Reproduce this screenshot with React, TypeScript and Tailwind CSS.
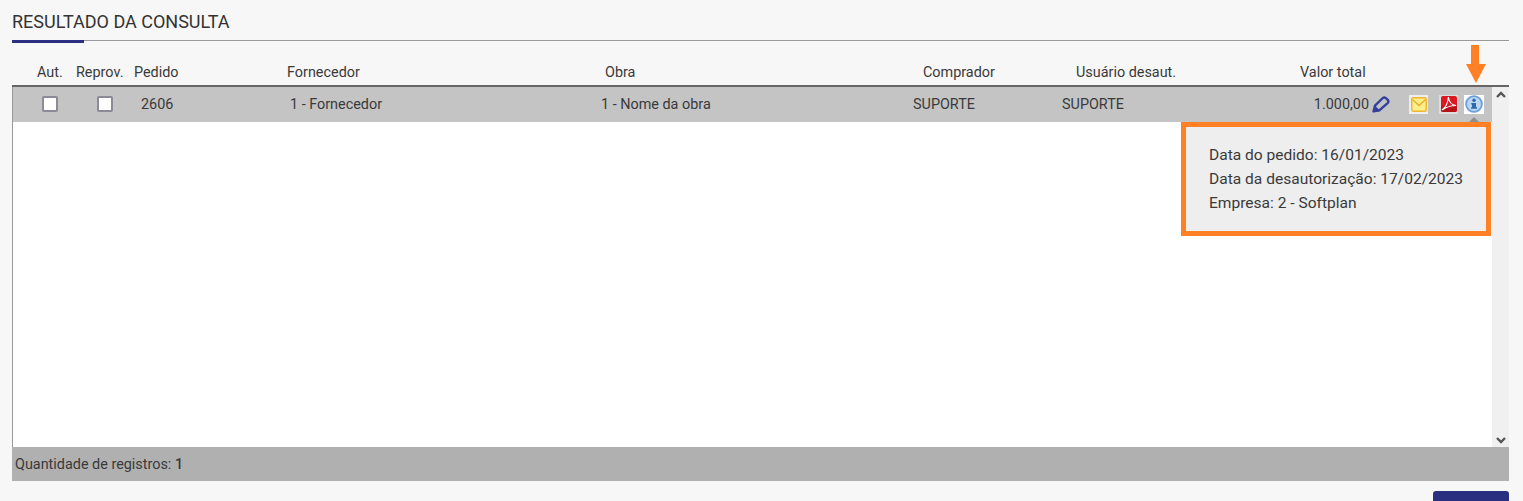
import React from 'react';

const headers = [
  { label: 'Aut.', cls: 'w-[64px] pl-[25px]' },
  { label: 'Reprov.', cls: 'w-[58px]' },
  { label: 'Pedido', cls: 'w-[153px]' },
  { label: 'Fornecedor', cls: 'w-[318px]' },
  { label: 'Obra', cls: 'w-[318px]' },
  { label: 'Comprador', cls: 'w-[153px]' },
  { label: 'Usuário desaut.', cls: 'w-[224px]' },
  { label: 'Valor total', cls: 'w-[66px]' },
];

const PencilIcon = () => (
  <svg width="18" height="17" viewBox="0 0 18 17" className="shrink-0">
    <path d="M1.6 15.4 L3 9.6 L10.8 2 Q12.2 0.9 13.6 1.9 L16 4.2 Q16.9 5.6 15.9 6.8 L7.6 14.2 Z" fill="none" stroke="#33409c" strokeWidth="2.4" strokeLinejoin="round" />
    <path d="M1.2 16 L3 9.6 L7.6 14.2 Z" fill="#33409c" />
  </svg>
);

const MailIcon = () => (
  <div className="w-[19px] h-[19px] bg-[#eeeeee] flex items-center justify-center">
    <svg width="16" height="15" viewBox="0 0 16 15">
      <rect x="0.75" y="0.75" width="14.5" height="13.5" rx="1.5" fill="#fdf08a" stroke="#f2b632" strokeWidth="1.5" />
      <path d="M1.5 2.5 L8 8.5 L14.5 2.5" fill="none" stroke="#eda92b" strokeWidth="1.3" />
    </svg>
  </div>
);

const PdfIcon = () => (
  <div className="w-[19px] h-[19px] bg-[#e0dcdc] flex items-center justify-center">
    <svg width="16" height="16" viewBox="0 0 16 16">
      <rect width="16" height="16" rx="2" fill="#dc1820" />
      <rect y="10" width="16" height="6" rx="2" fill="#b81016" />
      <path d="M1 14 C4.5 11.5 7 7 7.4 1 C8 6 10.5 9 15 9.5 C10 9.5 5.5 11 1 14 Z" fill="none" stroke="#ffffff" strokeWidth="1.1" />
    </svg>
  </div>
);

const InfoIcon = () => (
  <div className="w-[20px] h-[19px] bg-white flex items-center justify-center">
    <svg width="18" height="18" viewBox="0 0 18 18">
      <circle cx="9" cy="9" r="7.9" fill="#bcd6f3" stroke="#6a9fdc" strokeWidth="1.8" />
      <circle cx="9" cy="5.3" r="1.7" fill="#2c69ad" />
      <path d="M6.2 8 H11 V12.2 H12 V13.8 H6 V12.2 H7 V9.4 H6.2 Z" fill="#2c69ad" />
    </svg>
  </div>
);

const Checkbox = () => (
  <div className="w-[16px] h-[16px] -mt-[1px] bg-white border-2 border-[#8a8a98] rounded-[2px]" />
);

export default function App() {
  return (
    <div className="relative w-[1523px] h-[501px] overflow-hidden bg-[#f7f7f7] text-[#3a3a3a] text-[14.4px] font-['Roboto',sans-serif]">
      <div className="pl-[12px] pr-[14px]">
        <div className="h-[41px] border-b border-[#9a9a9a] relative pt-[12px]">
          <h2 className="text-[18px] leading-[20px] text-[#333333] uppercase">Resultado da consulta</h2>
          <div className="absolute left-0 bottom-[-3px] w-[72px] h-[3px] bg-[#2a2f80]" />
        </div>

        {/* cabecalho da tabela */}
        <div className="flex items-center h-[46px] pt-[21px] pb-[2px] leading-[23px] border-b-[2px] border-[#666666]">
          {headers.map((h) => (
            <div key={h.label} className={`shrink-0 whitespace-nowrap ${h.cls}`}>{h.label}</div>
          ))}
        </div>

        <div className="relative h-[360px] flex border-l border-[#9a9a9a] bg-white">
          <div className="flex-1 min-w-0">
            <div className="flex items-center h-[35px] bg-[#c4c4c4]">
              <div className="w-[29px] shrink-0" />
              <div className="w-[55px] shrink-0"><Checkbox /></div>
              <div className="w-[44px] shrink-0"><Checkbox /></div>
              <div className="w-[149px] shrink-0">2606</div>
              <div className="w-[311px] shrink-0">1 - Fornecedor</div>
              <div className="w-[312px] shrink-0">1 - Nome da obra</div>
              <div className="w-[149px] shrink-0">SUPORTE</div>
              <div className="w-[307px] shrink-0 whitespace-nowrap flex justify-between">
                <span>SUPORTE</span>
                <span>1.000,00</span>
              </div>
              <div className="ml-[3px] -mt-[1px] flex items-center">
                <PencilIcon />
                <div className="w-[19px]" />
                <MailIcon />
                <div className="w-[11px]" />
                <PdfIcon />
                <div className="w-[6px]" />
                <InfoIcon />
              </div>
            </div>
          </div>

          {/* barra de rolagem */}
          <div className="w-[17px] shrink-0 bg-[#f0f0f0] flex flex-col justify-between items-center pt-[4px] pb-[3px] text-[#555555]">
            <svg width="10" height="7" viewBox="0 0 10 7"><path d="M1 6 L5 2 L9 6" fill="none" stroke="currentColor" strokeWidth="2.4" /></svg>
            <svg width="10" height="7" viewBox="0 0 10 7"><path d="M1 1 L5 5 L9 1" fill="none" stroke="currentColor" strokeWidth="2.4" /></svg>
          </div>

          {/* seta do tooltip */}
          <div className="absolute left-[1456px] top-[30px] w-0 h-0 border-x-[5px] border-x-transparent border-b-[5px] border-b-[#8f8f8f]" />

          {/* tooltip destacado */}
          <div className="absolute left-[1168px] top-[35px] w-[310px] h-[114px] bg-[#eeeeee] border-[5px] border-[#ff8025] px-[23px] pt-[16px] text-[15.55px] leading-[24px] text-[#3a3a3a] whitespace-nowrap">
            <div>Data do pedido: 16/01/2023</div>
            <div>Data da desautorização: 17/02/2023</div>
            <div>Empresa: 2 - Softplan</div>
          </div>
        </div>

        <div className="h-[34px] bg-[#b0b0b0] flex items-center pl-[3px] pt-[1px]">
          <span>Quantidade de registros: <span className="font-medium">1</span></span>
        </div>

        <div className="flex justify-end pt-[10px]">
          <div className="w-[76px] h-[30px] bg-[#2a2f80] rounded-t-[3px]" />
        </div>
      </div>

      {/* seta laranja */}
      <svg width="20" height="38" viewBox="0 0 20 38" className="absolute left-[1466px] top-[45px]">
        <path d="M5 0 H13 V19 H20 L10 38 L0 19 H5 Z" fill="#ff8025" />
      </svg>
    </div>
  );
}
